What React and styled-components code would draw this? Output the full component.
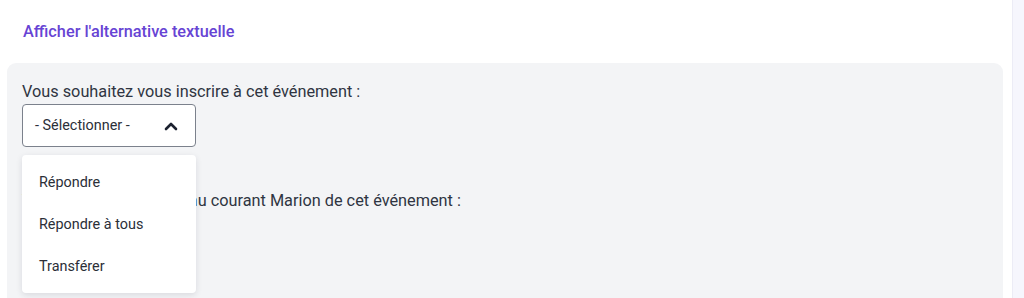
import React, { useState } from 'react';
import styled, { createGlobalStyle } from 'styled-components';

const GlobalStyles = createGlobalStyle`
    html, body {
        margin: 0;
        padding: 0;
        background: #ffffff;
        font-family: Roboto, "Liberation Sans", sans-serif;
        color: #2f3542;
    }
`;

const options = ['Répondre', 'Répondre à tous', 'Transférer'];

const ChevronUp = () => (
    <svg width="14" height="10" viewBox="0 0 14 10" fill="none">
        <path d="M2 8 L7 3 L12 8" stroke="#1c2230" strokeWidth="2.6" strokeLinecap="round" strokeLinejoin="round" />
    </svg>
);

const App = () => {
    const [open, setOpen] = useState(true);

    return (
        <>
            <GlobalStyles />
            <Page>
                <Main>
                    <AltLink href="#">Afficher l'alternative textuelle</AltLink>
                    <Panel>
                        <Field>
                            <Label>Vous souhaitez vous inscrire à cet événement :</Label>
                            <SelectWrap>
                                <SelectButton onClick={() => setOpen(!open)}>
                                    <span>- Sélectionner -</span>
                                    <ChevronUp />
                                </SelectButton>
                                {open && (
                                    <Menu>
                                        {options.map((o) => (
                                            <MenuItem key={o}>{o}</MenuItem>
                                        ))}
                                    </Menu>
                                )}
                            </SelectWrap>
                        </Field>
                        <Field $gap={44}>
                            <Label>Vous souhaitez mettre au courant Marion de cet événement :</Label>
                        </Field>
                    </Panel>
                </Main>
                <ScrollTrack />
            </Page>
        </>
    );
};

const Page = styled.div`
    display: flex;
    height: 298px;
    overflow: hidden;
`;

const Main = styled.div`
    flex: 1;
    display: flex;
    flex-direction: column;
    padding: 21px 9px 0 7px;
`;

const ScrollTrack = styled.div`
    width: 11px;
    background: #f6f6fd;
    border-left: 1px solid #ececf6;
`;

const AltLink = styled.a`
    margin-left: 16px;
    font-size: 16.3px;
    font-weight: 500;
    line-height: 21px;
    color: #6744d4;
    text-decoration: none;
    align-self: flex-start;
`;

const Panel = styled.div`
    margin-top: 21px;
    flex: 1;
    background: #f3f4f6;
    border-radius: 9px 9px 0 0;
    padding: 19px 16px 0 15px;
`;

const Field = styled.div`
    display: flex;
    flex-direction: column;
    align-items: flex-start;
    gap: 2px;
    margin-top: ${(p) => (p.$gap ? `${p.$gap}px` : '0')};
`;

const Label = styled.div`
    font-size: 16.3px;
    line-height: 20px;
    color: #2f3542;
`;

const SelectWrap = styled.div`
    position: relative;
`;

const SelectButton = styled.button`
    box-sizing: border-box;
    width: 174px;
    height: 43px;
    display: flex;
    align-items: center;
    justify-content: space-between;
    padding: 0 17px 0 12px;
    background: #ffffff;
    border: 1px solid #7b818c;
    border-radius: 4px;
    font-family: Roboto, "Liberation Sans", sans-serif;
    font-size: 14.4px;
    color: #2b2f38;
    cursor: pointer;
`;

const Menu = styled.ul`
    position: absolute;
    top: calc(100% + 8px);
    left: 0;
    box-sizing: border-box;
    width: 174px;
    margin: 0;
    padding: 6px 0;
    list-style: none;
    background: #ffffff;
    border-radius: 4px;
    box-shadow: 0 2px 6px rgba(30, 35, 60, 0.12);
    z-index: 2;
`;

const MenuItem = styled.li`
    height: 42px;
    display: flex;
    align-items: center;
    padding-left: 17px;
    font-size: 14.4px;
    color: #2b2f38;
    cursor: pointer;
`;

export default App;
